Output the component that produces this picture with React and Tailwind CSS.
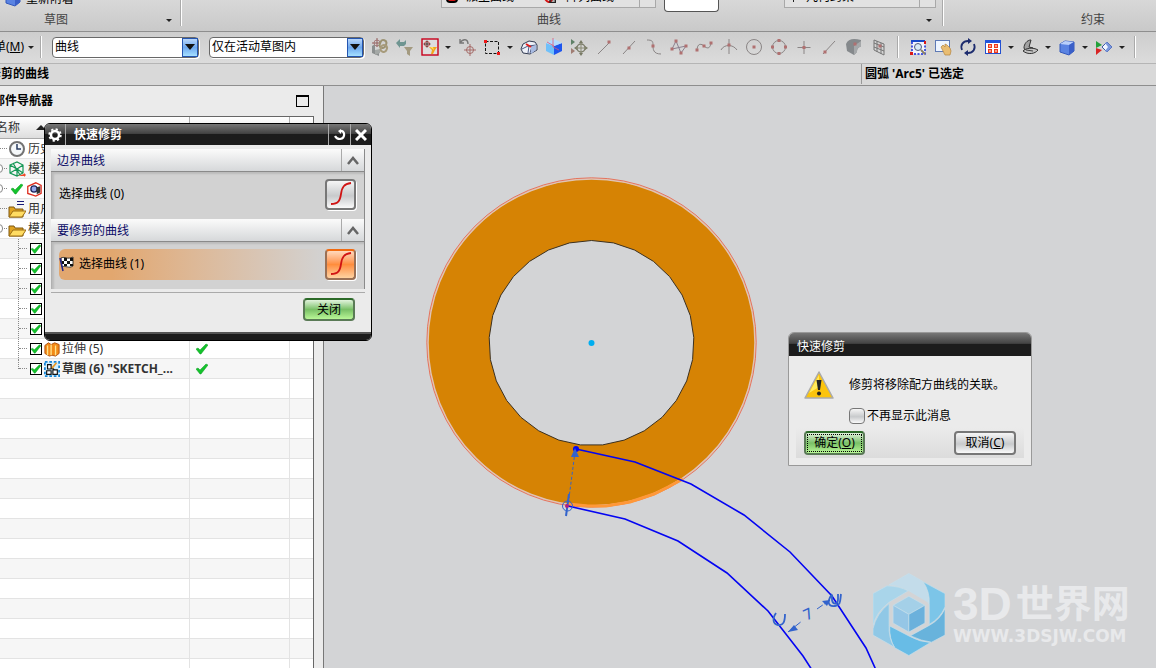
import clsx from 'clsx';

const GREY = '#8a8585';
const DOT = '#b07070';

function Icon({ children, className = 'h-[18px] w-[18px]' }) {
  return (
    <svg viewBox="0 0 18 18" className={clsx('shrink-0', className)} fill="none" aria-hidden="true">
      {children}
    </svg>
  );
}

const Dots = ({ points }) => points.map(([x, y]) => <rect key={`${x}-${y}`} x={x - 1.5} y={y - 1.5} width="3" height="3" fill={DOT} />);

const icons = {
  component: (
    <>
      <path d="M1 8l3-2v8l4 1v3l-7-3z" fill="#8b8f8f" />
      <path d="M4 12l5-1v4l-5 2z" fill="#a4a8a6" />
      <circle cx="6" cy="5" r="3" stroke="#a88080" />
      <path d="M6 0v9M1 5h9" stroke="#94605f" />
      <rect x="9" y="2" width="6" height="8" rx="3" stroke="#9b9272" strokeWidth="2" transform="rotate(20 12 6)" />
      <rect x="10" y="7" width="6" height="7" rx="3" stroke="#a79b7b" strokeWidth="2" transform="rotate(20 13 10)" />
    </>
  ),
  filterBack: (
    <>
      <path d="M0 5l4-4v3h4l2-2v4L8 8H4v2z" fill="#6f9591" />
      <path d="M8 9h9l-3 4v5l-3-2v-3z" fill="#a39a80" />
    </>
  ),
  snap: (
    <>
      <rect x="1" y="1" width="16" height="16" stroke="#c8001c" strokeWidth="1.4" fill="#dedede" />
      <circle cx="6" cy="6" r="2.5" stroke="#c03030" strokeWidth=".8" />
      <path d="M6 2.500v7M2.500 6h7" stroke="#301010" strokeWidth=".8" />
      <path d="M8 9h8l-2 3-2 4h-2l1-4z" fill="#f3a61c" />
      <path d="M9 9h3l1 3z" fill="#ffe460" />
    </>
  ),
  undoPoint: (
    <>
      <path d="M2 1v4h4M2 5c3-5 8-4 8 1" stroke="#777" strokeWidth="1.4" />
      <circle cx="12" cy="12" r="3.5" stroke="#a56b68" />
      <path d="M12 6v12M6 12h12" stroke="#a56b68" />
    </>
  ),
  rect: (
    <>
      <rect x="2.500" y="3.500" width="13" height="12" stroke="#111" strokeDasharray="3 1.500" />
      <path d="M1 2h3v3H1zM14 14h3v3h-3z" fill="#ef1616" />
    </>
  ),
  section: (
    <>
      <path d="M1 11l2-5 6-3 6 1 2 3v5l-7 4-7-1z" fill="#eef1f8" stroke="#323b52" />
      <path d="M9 8l-1 7M2 11l6-3 8-1M10 15l2-7" stroke="#4d5b84" />
      <path d="M6 6l5 3" stroke="#e31b1b" strokeWidth="2" />
      <path d="M11 9l5-2v5l-5 4z" fill="#a8bbe2" />
    </>
  ),
  cube: (
    <>
      <path d="M1 5l8 3v9l-8-4z" fill="#6fc0fa" />
      <path d="M9 8l8-3v8l-8 4z" fill="#1d55ee" />
      <path d="M1 5l8-4 8 4-8 3z" fill="#b2dcff" />
      <path d="M8 0v9l6 3M2 4l7 4" stroke="#dd5878" strokeWidth=".8" />
    </>
  ),
  move: (
    <>
      <path d="M1 10l4 3-4 3z" fill="#a07d73" />
      <path d="M1 1l4 3-4 3z" fill="#5f8067" />
      <circle cx="11" cy="10" r="4" stroke="#7c7d6b" strokeWidth="1.500" />
      <path d="M11 2l2 3H9zM11 18l2-3H9zM18 10l-3-2v4zM4 10l3-2v4z" fill="#777963" />
      <path d="M11 5v10M6 10h10" stroke="#8a8b74" />
    </>
  ),
  endPoint: (<><path d="M3 16L15 4" stroke={GREY} /><Dots points={[[14, 4]]} /></>),
  midPoint: (<><path d="M3 16L15 3" stroke={GREY} /><Dots points={[[9, 10]]} /></>),
  control: (<><path d="M2 2c5 0 6 1 6 5s0 9 8 9" stroke={GREY} /><Dots points={[[8, 8]]} /></>),
  polyline: (<><path d="M2 11L6 3l5 12 5-7M2 11l14-3" stroke="#8b8190" /><Dots points={[[2, 11], [6, 3], [11, 15], [16, 8]]} /></>),
  spline: (<><path d="M2 13c0-9 5-7 7-5s6 4 7-3" stroke={GREY} /><Dots points={[[2, 12], [9, 8], [16, 5]]} /></>),
  intersect: (<><path d="M9 1v15M1 12c3-6 12-6 16 0" stroke={GREY} /><Dots points={[[9, 7]]} /></>),
  center: (<><circle cx="9" cy="9" r="7.500" stroke={GREY} /><Dots points={[[9, 9]]} /></>),
  quadrant: (<><circle cx="9" cy="9" r="6.500" stroke={GREY} /><Dots points={[[9, 2.5], [9, 15.5], [2.5, 9], [15.5, 9]]} /></>),
  plus: (<><path d="M9 3v13M2.500 9.500h13" stroke={GREY} /><Dots points={[[9, 9.5]]} /></>),
  onCurve: (<><path d="M3 16L15 3" stroke={GREY} /><Dots points={[[5, 14]]} /></>),
  face: (
    <>
      <path d="M1 6c2-5 7-6 15-4v7c-3 0-4 2-4 5l-3 3-7-4z" fill="#85898c" />
      <path d="M9 8l7-5v6c-3 0-4 2-4 5l-3 3z" fill="#a5a8aa" />
      <Dots points={[[10, 6]]} />
    </>
  ),
  grid: (
    <>
      <path d="M4 2l10 4v11L4 12zM7 3v11M11 5v11M4 5l10 4M4 9l10 4" stroke="#757575" />
      <Dots points={[[10, 8]]} />
    </>
  ),
  fit: (
    <>
      <rect x="3" y="3" width="13" height="13" stroke="#1428dc" strokeWidth="1.500" strokeDasharray="2 1.500" fill="#f1f4ff" />
      <path d="M2 2h14v2H2z" fill="#1649c8" />
      <circle cx="9" cy="9" r="3.500" stroke="#525c78" fill="#d9ebf7" />
      <path d="M12 12l4 4" stroke="#8a8062" strokeWidth="2" />
      <path d="M1 14h3v3H1zM15 3h2v3h-2z" fill="#d91717" />
    </>
  ),
  pan: (
    <>
      <rect x="1.500" y="2.500" width="14" height="11" fill="#eef5ff" stroke="#5e7ab5" />
      <path d="M7 9l2-2 2 2V6l2 1 3 3 1 3-1 4h-5z" fill="#e9bd72" stroke="#b5843d" strokeWidth=".7" />
    </>
  ),
  rotate: (
    <>
      <path d="M3 12C1 7 4 3 9 3M15 6c2 5-1 9-6 9" stroke="#1d2c6e" strokeWidth="1.800" />
      <path d="M9 0l4 3-4 3zM9 12v6l-4-3z" fill="#1d2c6e" />
    </>
  ),
  layout: (
    <>
      <rect x="1.500" y="2.500" width="15" height="13" fill="#fff" stroke="#2350cf" />
      <path d="M1 2h16v3H1z" fill="#2053da" />
      <path d="M4 6h4v4H4zM10 6h4v4h-4zM4 11h4v4H4zM10 11h4v4h-4z" fill="#ee3a1b" />
      <path d="M5 8h2M11 8h2M5 13h2M11 13h2" stroke="#fff" />
    </>
  ),
  plane: (
    <>
      <path d="M3 10c0-4 3-8 7-8l-2 7 4 1-7 4z" fill="#a2a2a2" stroke="#333" />
      <path d="M2 13c3-3 10-4 15-1-3 4-10 5-15 1z" fill="#c3c3c3" stroke="#333" />
      <path d="M5 12l7 1" stroke="#444" />
    </>
  ),
  shaded: (
    <>
      <path d="M2 6l5-3 9 1v9l-5 4-9-3z" fill="#5a83e2" stroke="#3358ba" />
      <path d="M2 6l5-3 9 1-5 3z" fill="#b9cffa" />
      <path d="M11 7l5-3v9l-5 4z" fill="#3a5fc8" />
    </>
  ),
  clip: (
    <>
      <path d="M1 3l6 4-6 3z" fill="#22a03a" />
      <path d="M1 10l6 2-6 5z" fill="#d82424" />
      <path d="M7 9l5-5 5 5-5 5z" fill="#f2f6ff" stroke="#3a54a6" />
      <path d="M10 5l2-1 5 5-5 5-2-1 3-4z" fill="#7b98dd" />
    </>
  ),
};

const toolbar = [
  ['component', '组件'], ['filterBack', '重置过滤器'], ['snap', '捕捉点', true], ['undoPoint', '清除点'],
  ['rect', '矩形选择', true], ['section', '剖切'], ['cube', '体'], ['move', '移动'], ['endPoint', '端点'],
  ['midPoint', '中点'], ['control', '控制点'], ['polyline', '折线'], ['spline', '样条'], ['intersect', '交点'],
  ['center', '圆心'], ['quadrant', '象限点'], ['plus', '现有点'], ['onCurve', '点在曲线上'], ['face', '点在面上'],
  ['grid', '网格点'], ['sep'], ['fit', '适合窗口'], ['pan', '平移'], ['rotate', '旋转'], ['layout', '布局', true],
  ['plane', '方位', true], ['shaded', '着色', true], ['clip', '编辑截面', true], ['sep'],
];

const Caret = () => <span className="h-0 w-0 border-x-3 border-t-3 border-x-transparent border-t-[#222]" />;

function Divider({ className = 'h-[22px]' }) {
  return <span className={clsx('w-[2px] shrink-0 border-l border-[#aaa] bg-white', className)} />;
}

function Ribbon() {
  return (
    <div className="flex h-8 shrink-0 overflow-hidden border-b border-[#8e8e8e] bg-linear-to-b from-[#d8d8d8] to-[#c9c9c9] text-[#444]">
      <div className="flex w-[180px] shrink-0 flex-col justify-between">
        <button className="flex h-[7px] items-end gap-1 pl-1 leading-4 text-black">
          <Icon>{icons.shaded}</Icon>
          <span>重新附着</span>
        </button>
        <div className="flex items-center pr-2 pb-[3px] pl-11">
          <span className="flex-1">草图</span>
          <Caret />
        </div>
      </div>
      <Divider className="h-[26px]" />
      <div className="flex w-[760px] shrink-0 flex-col justify-between">
        <div className="flex h-3 items-start pl-[259px] text-black">
          <div className="flex h-2 w-[215px] items-end border border-t-0 border-[#a9a9a9] bg-[#e2e2e2] pl-1 leading-4">
            <span className="mr-2 mb-1 h-3 w-3 shrink-0 rounded-sm border-2 border-black bg-[#d41515]" />
            <span className="mb-[2px] w-[76px]">派生曲线</span>
            <Icon className="mb-1 h-3 w-4">
              <path d="M1 11c5 8 9 7 12 0" stroke="#d41515" strokeWidth="3" />
              <path d="M9 13h8v4H9z" stroke="#222" strokeWidth="2" />
            </Icon>
            <span className="mb-[2px] ml-2">阵列曲线</span>
            <span className="ml-auto h-2 w-4 shrink-0 border-l border-[#a9a9a9]" />
          </div>
          <div className="ml-2 h-3 w-[55px] rounded-b-sm border border-t-0 border-[#555] bg-white" />
          <div className="ml-[65px] flex h-2 w-[152px] items-end border border-t-0 border-[#a9a9a9] bg-[#e2e2e2] pl-2 leading-4">
            <span className="mr-3 mb-[5px] h-4 w-px shrink-0 bg-[#222]" />
            <span className="mb-[2px]">几何约束</span>
            <span className="ml-auto h-2 w-4 shrink-0 border-l border-[#a9a9a9]" />
          </div>
        </div>
        <div className="flex items-center pr-[10px] pb-[3px]">
          <span className="flex-1 pr-[10px] text-center">曲线</span>
          <Caret />
        </div>
      </div>
      <Divider className="h-[26px]" />
      <div className="flex w-[298px] shrink-0 items-end justify-center pb-[3px]">约束</div>
    </div>
  );
}

function Combo({ label, value, className }) {
  return (
    <div className={clsx('relative h-[21px] shrink-0', className)}>
      <select aria-label={label} className="h-full w-full appearance-none rounded-sm border border-[#686868] bg-white pl-[2px] text-black shadow-[1px_1px_0_#fff]">
        <option>{value}</option>
      </select>
      <span className="pointer-events-none absolute inset-y-px right-px flex w-4 items-center justify-center border border-[#2455b0] bg-linear-to-b from-[#b9d7fa] via-[#6ea8ee] to-[#a6e0ff]">
        <span className="h-0 w-0 border-x-5 border-t-6 border-x-transparent border-t-[#111]" />
      </span>
    </div>
  );
}

function Toolbar() {
  return (
    <div className="flex h-8 shrink-0 items-center overflow-hidden border-b border-[#b5b5b5] bg-linear-to-b from-[#cdcdcd] to-[#dcdcdc] pb-px">
      <button className="-ml-[6px] flex w-[46px] shrink-0 items-center gap-1 whitespace-nowrap">
        <span>单(<u>M</u>)</span>
        <Caret />
      </button>
      <Divider />
      <Combo label="类型过滤器" value="曲线" className="ml-[10px] w-[147px]" />
      <Combo label="选择范围" value="仅在活动草图内" className="mr-[3px] ml-[10px] w-[155px]" />
      {toolbar.map(([name, title, menu], i) =>
        name === 'sep' ? (
          <span key={i} className="flex w-[14px] shrink-0 justify-center"><Divider /></span>
        ) : (
          <button key={i} aria-label={title} className="flex shrink-0 items-center">
            <span className="flex w-[25px] justify-center"><Icon>{icons[name]}</Icon></span>
            {menu && <span className="flex w-3 justify-center"><Caret /></span>}
          </button>
        )
      )}
    </div>
  );
}

const Tick = ({ className = 'h-3 w-3' }) => (
  <svg viewBox="0 0 12 12" className={className} fill="none" aria-hidden="true">
    <path d="M0 6l2-1 2 2 6-6 2 1-7 9H4z" fill="#14c22c" stroke="#0d9a20" strokeWidth=".5" />
  </svg>
);

const treeIcons = {
  clock: (
    <Icon>
      <circle cx="9" cy="9" r="7" fill="#f5f8fa" stroke="#737373" strokeWidth="2" />
      <path d="M9 4v5h4" stroke="#2a3c62" strokeWidth="1.500" />
    </Icon>
  ),
  model: (
    <Icon>
      <path d="M2 5l7-3 6 3v8l-6 3-7-3zM2 5l7 4 6-4M9 9v7M5 3l7 12M2 13l7-4 6 4" stroke="#139755" strokeWidth="1.200" />
      <path d="M10 16l6-2v-1l2 2-2 2v-1z" fill="#f04a28" />
    </Icon>
  ),
  view: (
    <Icon className="h-4 w-4">
      <path d="M2 6l9-4 6 3v9l-6 3-9-3z" fill="#fff" stroke="#de2e20" strokeWidth="1.500" />
      <circle cx="9" cy="9" r="3.500" fill="#96a8ec" stroke="#20285e" strokeWidth="1.500" />
      <path d="M12 7l4-1v7l-4 2z" fill="#333" />
    </Icon>
  ),
  folder: (
    <Icon>
      <path d="M1 16V6h5l1 2h8v8z" fill="#e0a321" stroke="#7d5711" />
      <path d="M1 16l4-6h13l-4 6z" fill="#ffdc62" stroke="#9b6d12" />
    </Icon>
  ),
  expressions: (
    <Icon>
      <path d="M1 17V7h5l1 2h8v8z" fill="#e0a321" stroke="#7d5711" />
      <path d="M1 17l4-6h13l-4 6z" fill="#ffdc62" stroke="#9b6d12" />
      <path d="M9 1.500h7M9 4.500h7" stroke="#1a1a78" />
    </Icon>
  ),
  extrude: (
    <Icon className="h-4 w-4">
      <path d="M1 5l4-3 3 2 4-2 5 2v10l-4 3-4-1-3 1-5-3z" fill="#f38a16" stroke="#aa4c0b" />
      <path d="M4 5v11M8 4v12M13 5v11" stroke="#ffe28b" strokeWidth="1.500" />
    </Icon>
  ),
  sketch: (
    <Icon className="h-4 w-4">
      <rect x="1" y="1" width="16" height="16" fill="#cdeeff" stroke="#1687d8" strokeWidth="2" strokeDasharray="3 2" />
      <path d="M4 4h4v5H4zM3 11h5v4H3zM10 10h5v5h-5zM8 7l4 3" stroke="#111" fill="#fff" strokeWidth="1.300" />
      <path d="M9 8l5-6" stroke="#ed9b27" strokeWidth="2" />
    </Icon>
  ),
};

const roots = [
  { icon: 'clock', text: '历史' },
  { icon: 'model', text: '模型', open: true },
  { icon: 'view', open: true, ok: true },
  { icon: 'expressions', text: '用户' },
  { icon: 'folder', text: '模型', open: true },
];

const features = [
  {}, {}, {}, {}, {},
  { icon: 'extrude', text: '拉伸 (5)' },
  { icon: 'sketch', text: '草图 (6) "SKETCH_...', bold: true },
];

function RootCell({ row }) {
  return (
    <div className="flex h-[19px] items-center overflow-hidden whitespace-nowrap">
      {row.open && <span className="-ml-2 h-[9px] w-[11px] shrink-0 rounded-sm border border-[#888] bg-white" />}
      <span className={clsx('mr-px shrink-0 border-t border-dotted border-[#888]', row.open ? 'ml-px w-[3px]' : 'w-[7px]')} />
      {row.ok && <Tick className="mx-[3px] h-3 w-3 shrink-0" />}
      {treeIcons[row.icon]}
      {row.text && <span className="ml-[2px]">{row.text}</span>}
    </div>
  );
}

function FeatureCell({ row, index, last }) {
  return (
    <div className="flex h-[19px] items-center pl-[18px] whitespace-nowrap">
      <span className={clsx('border-l border-dotted border-[#888]', last ? 'h-[10px] self-start' : 'h-full')} />
      <span className="w-2 border-t border-dotted border-[#888]" />
      <label className="ml-[3px] grid h-3 w-3 place-items-center">
        <input type="checkbox" defaultChecked aria-label={row.text ?? `特征 ${index}`} className="peer col-start-1 row-start-1 h-3 w-3 appearance-none border border-black bg-white" />
        <Tick className="pointer-events-none invisible col-start-1 row-start-1 h-[10px] w-[10px] peer-checked:visible" />
      </label>
      <span className="ml-[2px] flex">{treeIcons[row.icon]}</span>
      {row.text && <span className={clsx('ml-[2px]', row.bold && 'font-bold')}>{row.text}</span>}
    </div>
  );
}

function Navigator() {
  const blanks = Array.from({ length: 16 }, (_, i) => i);
  const rowCls = 'h-5 even:bg-[#f6f6f6] [&>td]:border-b [&>td]:border-[#e3e3e3] [&>td+td]:border-l';
  return (
    <aside className="flex w-[324px] shrink-0 flex-col overflow-hidden border-r border-[#777] bg-[#ebebeb]">
      <div className="flex h-[30px] shrink-0 items-center justify-between pr-[14px]">
        <h2 className="-ml-[7px] font-bold">部件导航器</h2>
        <button aria-label="最大化" className="h-3 w-[13px] border border-t-2 border-black" />
      </div>
      <div className="w-[314px] flex-1 overflow-hidden border-t border-r border-[#666] bg-white">
        <table className="w-full table-fixed border-separate border-spacing-0 text-[#333]">
          <colgroup>
            <col />
            <col className="w-[100px]" />
            <col className="w-[24px]" />
          </colgroup>
          <thead>
            <tr className="h-[22px] bg-linear-to-b from-white to-[#dcdcdc] text-left [&>th]:border-b [&>th]:border-[#aaa] [&>th]:font-normal [&>th+th]:border-l">
              <th>
                <span className="-ml-1 flex items-center gap-4">
                  名称
                  <span className="h-0 w-0 border-x-5 border-b-5 border-x-transparent border-b-[#222]" />
                </span>
              </th>
              <th />
              <th />
            </tr>
          </thead>
          <tbody className="[&_td]:p-0">
            {roots.map((row, i) => (
              <tr key={`r${i}`} className={rowCls}><td><RootCell row={row} /></td><td /><td /></tr>
            ))}
            {features.map((row, i) => (
              <tr key={`f${i}`} className={rowCls}>
                <td><FeatureCell row={row} index={i} last={i === features.length - 1} /></td>
                <td><Tick className="ml-[6px] h-3 w-3" /></td>
                <td />
              </tr>
            ))}
            {blanks.map((i) => (
              <tr key={`b${i}`} className={rowCls}><td /><td /><td /></tr>
            ))}
          </tbody>
        </table>
      </div>
    </aside>
  );
}

// regular polygon used for the faceted inner edge
const facets = Array.from({ length: 29 }, (_, i) => {
  const a = -Math.PI / 2 + (i * 2 * Math.PI) / 29;
  return `${(591.5 + 102.5 * Math.cos(a)).toFixed(1)},${(343 + 102.5 * Math.sin(a)).toFixed(1)}`;
}).join(' ');

function Drawing() {
  return (
    <svg viewBox="324 86 832 582" preserveAspectRatio="xMinYMin meet" className="absolute top-0 left-0 h-[582px] w-[832px]" fill="none">
      <circle cx="591.500" cy="342.500" r="163.500" fill="#d68304" />
      <circle cx="591.500" cy="342.500" r="163.500" stroke="#e0c4b4" strokeWidth="1.500" />
      <circle cx="591.500" cy="342.500" r="164.700" stroke="#ea5a3e" strokeWidth=".8" />
      <polygon points={facets} fill="#d3d4d6" stroke="#3b3020" />
      <path d="M568 504l20 2h18l24-4 24-8 14-7 15-8" stroke="#ff9838" strokeWidth="3" />
      <circle cx="591.500" cy="343" r="3" fill="#00aef0" />
      <g stroke="#0404f2" strokeWidth="1.600">
        <path d="M576 449l59 13 56 22 53 31 46 37 42 44 34 52 10 22" />
        <path d="M568 506l57 13 53 22 49 32 41 38 35 45 9 14" />
      </g>
      <circle cx="576" cy="449" r="3" fill="#0404f2" />
      <g stroke="#3263cc">
        <path d="M575 452l-6 46" strokeDasharray="3 2" />
        <path d="M569 494l-3 22" strokeWidth="2" />
        <circle cx="567.500" cy="506" r="5" />
        <path d="M788 632l14-11M817 609l13-9" strokeDasharray="7 2" />
        <path d="M776 613c-4 6-3 11 2 12s7-3 7-11M832 594c-6 9-3 13 3 12s5-5 6-12M832 595v5c1 5 6 5 6-1v-5" strokeWidth="1.800" />
      </g>
      <path d="M575 448l4 9h-8zM788 632l6-7 4 5zM830 600l-3 6-5-5z" fill="#3263cc" />
      <circle cx="567" cy="506" r="2" fill="#b02080" />
      <text x="806" y="621" transform="rotate(-25 806 621)" fill="#3263cc" className="font-['DejaVu_Sans'] text-[15px]">7</text>
    </svg>
  );
}

function Watermark() {
  return (
    <div className="absolute top-[487px] left-[549px] flex gap-2 text-[#e8e9eb]">
      <svg viewBox="40 40 215 245" className="h-[83px] w-[72px] shrink-0" stroke="#c6e0ec" strokeWidth="2" aria-hidden="true">
        <path d="M88 74l59-34 41 23q20 30 18 67l-58-37q-30-18-60-19z" fill="#c3dcea" />
        <path d="M190 65l65 35v40q-15 35-47 52v-62q2-35-18-65z" fill="#7cc5e8" />
        <path d="M255 145v79l-40 21q-30-3-63-19l56-31q32-17 47-50z" fill="#68b3dc" />
        <path d="M90 197l60 31q30 17 62 18l-65 39-42-23q-17-27-15-65z" fill="#68bce6" />
        <path d="M88 130v62q-2 43 16 68l-64-36v-19q10-45 48-75z" fill="#90c8e6" />
        <path d="M40 100l42-23q38 1 63 15l-57 34q-38 29-48 69z" fill="#a9d5ea" />
        <path d="M147 93l56 33v63l-56 32-56-32v-63z" fill="#d3d4d6" stroke="none" />
        <path d="M147 108l48 27-48 27-47-27z" fill="#a4d0e8" />
        <path d="M100 135l47 27v53l-47-27z" fill="#95c6e6" />
        <path d="M195 135l-48 27v53l48-27z" fill="#6bb1dc" />
      </svg>
      <div className="pt-2 font-bold whitespace-nowrap">
        <div className="flex h-[46px] items-center gap-1 font-['Liberation_Sans','Noto_Sans_CJK_SC',sans-serif]">
          <span className="text-[46px]">3D</span>
          <span className="text-[38px]">世界网</span>
        </div>
        <div className="pt-px font-['DejaVu_Sans',sans-serif] text-[17px]">WWW.3DSJW.COM</div>
      </div>
    </div>
  );
}

const titleBar = 'flex items-center bg-linear-to-b from-[#777] from-0% via-[#444] via-45% to-[#1c1c1c] to-50% text-white';
const greenBtn = 'border-[#5a7a56] border-t-[#2c6a28] bg-linear-to-b from-[#e2f3dd] from-0% via-[#79c066] via-50% to-[#b9f797]';
const greyBtn = 'border-[#777] bg-linear-to-b from-[#f6f6f6] from-0% via-[#c8cacc] via-55% to-[#fafafa]';

function SelectButton({ active, label }) {
  return (
    <button
      aria-label={label}
      className={clsx(
        'flex h-[31px] w-[31px] items-center justify-center rounded border-2 shadow-[1px_1px_0_#fff]',
        active ? 'border-t-[#f06a10] border-r-[#9a7055] border-b-[#9a7055] border-l-[#9a7055] bg-linear-to-b from-[#ffd9bd] via-[#ff8d3c] to-[#ffd2a0]' : greyBtn
      )}
    >
      <svg viewBox="0 0 24 24" className="h-6 w-6" fill="none" aria-hidden="true">
        <path d="M2 22c7 0 9-3 10-10S15 2 22 1" stroke="#d01414" strokeWidth="1.800" />
      </svg>
    </button>
  );
}

function Section({ title, children }) {
  return (
    <section className="border-r border-[#8a8a8a]">
      <div className="flex h-[23px] items-center justify-between border-b border-[#8a8a8a] bg-linear-to-b from-[#fbfbfb] to-[#d6d8da]">
        <h3 className="pt-px pl-[6px] text-[#0b0b66]">{title}</h3>
        <button aria-label="折叠" className="flex h-full w-[23px] items-center justify-center border-l border-[#aaa]">
          <svg viewBox="0 0 12 9" className="h-[9px] w-3" fill="none"><path d="M1 8l5-6 5 6" stroke="#666" strokeWidth="2.500" /></svg>
        </button>
      </div>
      <div className="flex h-[47px] items-center border-l border-[#b0b0b0] bg-[#d2d2d2] pr-2 pb-[3px] pl-[7px] shadow-[inset_2px_2px_2px_#bbb]">{children}</div>
    </section>
  );
}

function TrimDialog() {
  return (
    <div role="dialog" aria-label="快速修剪" className="absolute top-[123px] left-[44px] w-[328px] overflow-hidden rounded-md border border-black bg-[#ebebeb]">
      <div className={clsx(titleBar, 'h-[21px]')}>
        <button aria-label="设置" className="flex h-full w-[21px] items-center justify-center border-r border-[#aaa]">
          <svg viewBox="0 0 14 14" className="h-[14px] w-[14px]" fill="none" stroke="#fff">
            <circle cx="7" cy="7" r="4" strokeWidth="2.500" />
            <circle cx="7" cy="7" r="5.800" strokeWidth="1.800" strokeDasharray="2.200 2.350" />
          </svg>
        </button>
        <h2 className="flex-1 pl-2 font-bold">快速修剪</h2>
        <button aria-label="重置" className="flex h-full w-[22px] items-center justify-center border-l border-[#aaa]">
          <svg viewBox="0 0 12 12" className="h-3 w-3" fill="none" stroke="#fff" strokeWidth="2.200"><path d="M6 2c5-1 6 7 0 8-3 0-4-1-5-3" /><path d="M7 0v5L4 2z" fill="#fff" stroke="none" /></svg>
        </button>
        <button aria-label="关闭窗口" className="flex h-full w-[21px] items-center justify-center border-l border-[#aaa]">
          <svg viewBox="0 0 12 12" className="h-3 w-3" stroke="#fff" strokeWidth="3"><path d="M1 1l10 10M11 1L1 11" /></svg>
        </button>
      </div>
      <div className="px-[6px] pt-1">
        <Section title="边界曲线">
          <span className="flex-1">选择曲线 (0)</span>
          <SelectButton label="选择边界曲线" />
        </Section>
        <Section title="要修剪的曲线">
          <div className="flex h-[31px] flex-1 items-center gap-1 rounded-l-md bg-linear-to-r from-[#e2a76f] from-20% to-[#d2d2d2]">
            <svg viewBox="0 0 16 16" className="h-4 w-4" aria-hidden="true">
              <path d="M2 2c4-2 6 2 12-1v9c-5 3-7-1-11 1z" fill="#fff" stroke="#111" strokeWidth=".8" />
              <path d="M5 2h3v3H5zM11 2h3v3h-3zM3 5h2v3H3zM8 5h3v3H8zM5 8h3v2H5zM11 8h3v2h-3z" fill="#111" />
              <path d="M1 2l3 13" stroke="#26268c" strokeWidth="1.500" />
            </svg>
            <span>选择曲线 (1)</span>
          </div>
          <SelectButton active label="选择要修剪的曲线" />
        </Section>
        <div className="mt-[3px] flex justify-end border-t border-[#aaa] pt-[5px] pr-[10px] pb-[11px]">
          <button className={clsx('h-[23px] w-[52px] rounded border-2', greenBtn)}>关闭</button>
        </div>
      </div>
      <div className="h-2 border-t-2 border-[#555] bg-[#1c1c1c]" />
    </div>
  );
}

function MessageDialog() {
  return (
    <div role="alertdialog" aria-label="快速修剪" className="absolute top-[332px] left-[788px] w-[244px] overflow-hidden rounded-t-md border border-[#999] bg-[#ebebeb]">
      <div className={clsx(titleBar, 'h-[23px] pt-1 pl-2')}>快速修剪</div>
      <div className="flex gap-[15px] pt-[15px] pl-[15px]">
        <svg viewBox="0 0 30 28" className="h-7 w-[30px] shrink-0" aria-hidden="true">
          <path d="M15 1l14 26H1z" fill="#fbc40d" stroke="#aaa" strokeWidth="1.500" strokeLinejoin="round" />
          <path d="M15 4L5 22l10-6z" fill="#ffe95c" />
          <path d="M12.500 9h5l-1.500 10h-2z" fill="#222" />
          <circle cx="15" cy="22.500" r="2" fill="#222" />
        </svg>
        <div className="pt-[6px] whitespace-nowrap">
          <p>修剪将移除配方曲线的关联。</p>
          <label className="mt-[15px] flex items-center gap-[2px]">
            <input type="checkbox" className={clsx('h-4 w-4 appearance-none rounded-sm border', greyBtn)} />
            不再显示此消息
          </label>
        </div>
      </div>
      <div className="mx-[7px] mt-[3px] mb-[7px] flex h-[31px] items-center justify-between bg-linear-to-b from-[#ebebeb] to-[#dcdcdc] px-2">
        <button className={clsx('h-6 w-[61px] rounded border-2 p-px', greenBtn)}>
          <span className="flex h-full items-center justify-center border border-dotted border-black">确定(<u>O</u>)</span>
        </button>
        <button className={clsx('h-6 w-[62px] rounded border-2', greyBtn)}>取消(<u>C</u>)</button>
      </div>
    </div>
  );
}

export default function App() {
  return (
    <div className="relative flex h-screen flex-col overflow-hidden bg-[#d3d4d6] font-['Noto_Sans','Noto_Sans_CJK_SC',sans-serif] text-xs leading-4 text-black">
      <Ribbon />
      <Toolbar />
      <div className="flex h-[22px] shrink-0 items-center border-b border-[#8e8e8e] bg-[#d9d9d9] pb-px font-bold">
        <p className="-ml-[11px] flex-1 whitespace-nowrap">修剪的曲线</p>
        <p className="flex h-full w-[295px] items-center border-l border-[#999] pl-[3px]">圆弧 'Arc5' 已选定</p>
      </div>
      <div className="flex min-h-0 flex-1">
        <Navigator />
        <main className="relative min-w-0 flex-1 overflow-hidden">
          <Drawing />
          <Watermark />
        </main>
      </div>
      <TrimDialog />
      <MessageDialog />
    </div>
  );
}
